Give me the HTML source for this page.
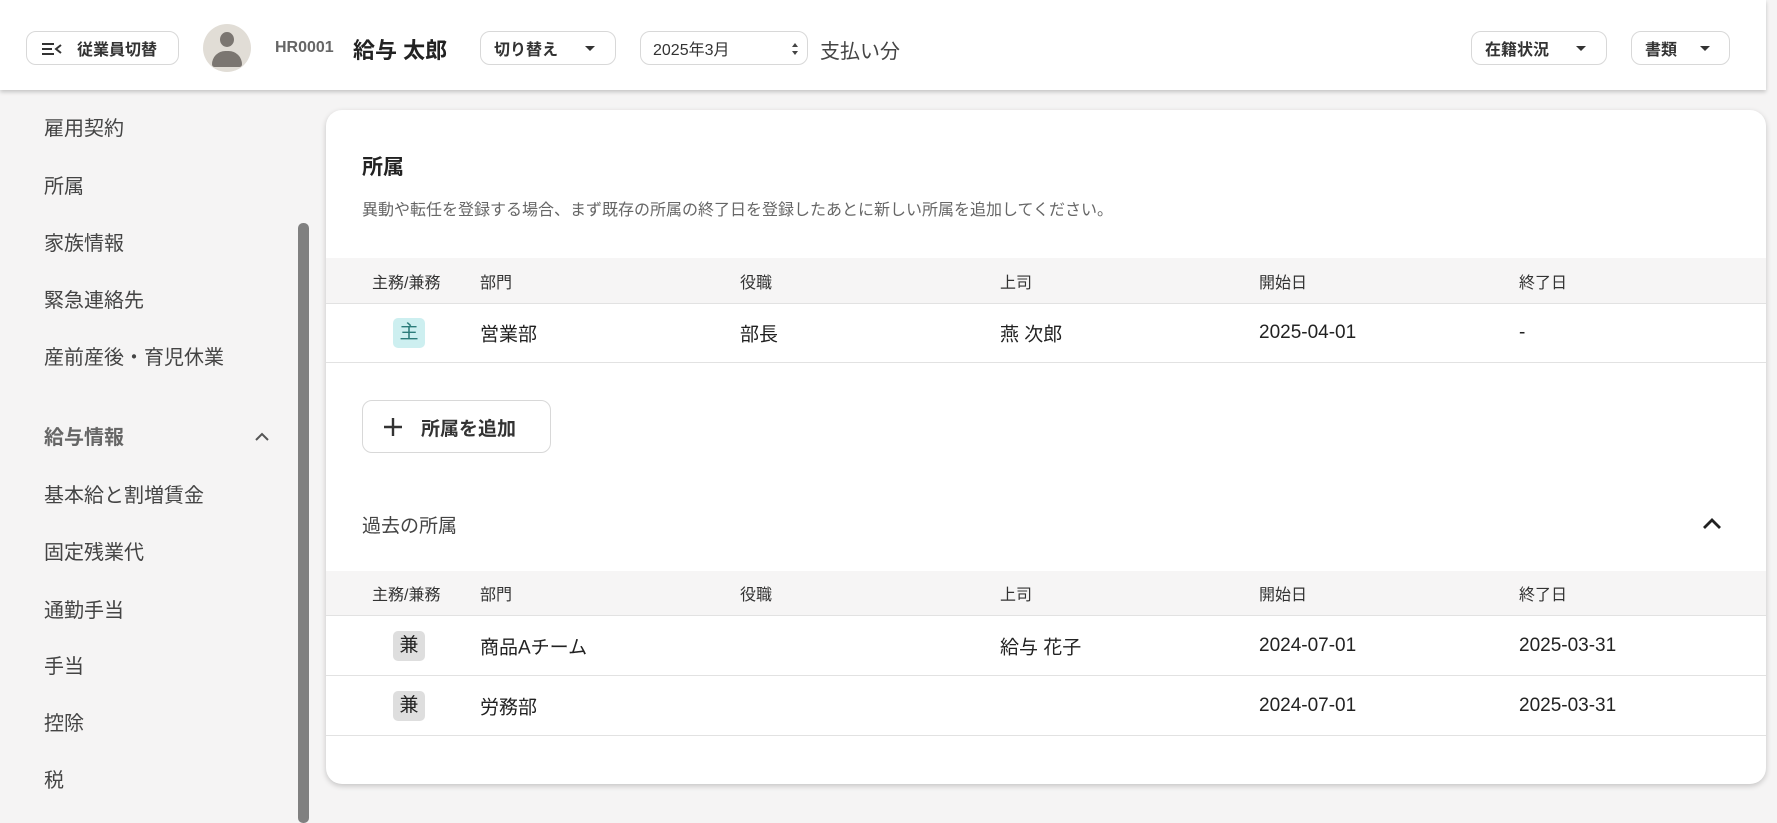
<!DOCTYPE html>
<html><head><meta charset="utf-8">
<style>
*{box-sizing:border-box;margin:0;padding:0}
body{width:1777px;height:801px;overflow:hidden;background:#f5f4f4;font-family:"Liberation Sans","Noto Sans CJK JP",sans-serif;color:#333;position:relative}
.hdr{position:absolute;left:0;top:0;width:1766px;height:90px;background:#fff;box-shadow:0 2px 4px rgba(0,0,0,.2);z-index:2}
.btn{position:absolute;top:31px;height:34px;border:1px solid #d8d8d8;border-radius:10px;background:#fff;font-weight:bold;font-size:16px;display:flex;align-items:center;color:#333}
.tri{display:inline-block;width:0;height:0;border-left:5px solid transparent;border-right:5px solid transparent;border-top:5px solid #333;position:absolute}
.abs{position:absolute}
.side{position:absolute;left:0;top:90px;width:310px;height:711px;background:#f5f4f4}
.side div{position:absolute;left:44px;font-size:20px;color:#444;line-height:24px}
.card{position:absolute;left:326px;top:110px;width:1440px;height:674px;background:#fff;border-radius:16px;box-shadow:0 2px 6px rgba(0,0,0,.2)}
.th{position:absolute;left:0;width:1440px;background:#f6f5f5;border-bottom:1px solid #e2e2e2}
.row{position:absolute;left:0;width:1440px;border-bottom:1px solid #e2e2e2}
.c{position:absolute;top:50%;transform:translateY(-50%);white-space:nowrap}
.th .c{font-size:16px;color:#333}
.row .c{font-size:19px;color:#222}
.badge{position:absolute;left:67px;top:50%;transform:translateY(-50%);width:32px;height:30px;border-radius:5px;text-align:center;line-height:30px;font-size:19px}
</style></head><body>
<div class="hdr">
  <div class="btn" style="left:26px;width:153px">
    <svg class="abs" style="left:14px;top:11px" width="22" height="12" viewBox="0 0 22 12"><path d="M1 1h12M1 6h10M1 11h12" stroke="#333" stroke-width="2"/><path d="M20 2l-5 4 5 4" stroke="#333" stroke-width="2" fill="none"/></svg>
    <span class="abs" style="left:50px">従業員切替</span></div>
  <div class="abs" style="left:203px;top:24px;width:48px;height:48px;border-radius:50%;background:#e1ddd6;overflow:hidden">
    <div class="abs" style="left:17px;top:8px;width:14px;height:15px;border-radius:50%;background:#7b7671"></div>
    <div class="abs" style="left:9px;top:27px;width:30px;height:16px;border-radius:15px 15px 3px 3px;background:#7b7671"></div>
  </div>
  <div class="abs" style="left:275px;top:39px;font-size:16px;font-weight:bold;color:#666">HR0001</div>
  <div class="abs" style="left:353px;top:33px;font-size:22px;font-weight:bold;color:#222">給与 太郎</div>
  <div class="btn" style="left:480px;width:136px"><span class="abs" style="left:13px">切り替え</span><span class="tri" style="left:104px;top:14px"></span></div>
  <div class="btn" style="left:640px;width:168px;font-weight:normal;font-size:16px"><span class="abs" style="left:12px">2025年3月</span>
    <svg class="abs" style="left:150px;top:10px" width="8" height="14"><path d="M1 5l3-4 3 4zM1 9l3 4 3-4z" fill="#444"/></svg></div>
  <div class="abs" style="left:820px;top:35px;font-size:20px;color:#444">支払い分</div>
  <div class="btn" style="left:1471px;width:136px"><span class="abs" style="left:13px">在籍状況</span><span class="tri" style="left:104px;top:14px"></span></div>
  <div class="btn" style="left:1631px;width:99px"><span class="abs" style="left:13px">書類</span><span class="tri" style="left:68px;top:14px"></span></div>
</div>
<div class="side">
  <div style="top:27px">雇用契約</div>
  <div style="top:85px">所属</div>
  <div style="top:142px">家族情報</div>
  <div style="top:199px">緊急連絡先</div>
  <div style="top:256px">産前産後・育児休業</div>
  <div style="top:336px;font-weight:bold;color:#666">給与情報</div>
  <svg class="abs" style="left:254px;top:342px" width="16" height="10"><path d="M2 8l6-6 6 6" stroke="#555" stroke-width="2" fill="none"/></svg>
  <div style="top:394px">基本給と割増賃金</div>
  <div style="top:451px">固定残業代</div>
  <div style="top:509px">通勤手当</div>
  <div style="top:565px">手当</div>
  <div style="top:622px">控除</div>
  <div style="top:679px">税</div>
  <span class="abs" style="left:298px;top:133px;width:11px;height:600px;background:#808080;border-radius:5px"></span>
</div>
<div class="card">
  <div class="abs" style="left:36px;top:41px;font-size:21px;font-weight:bold;color:#222">所属</div>
  <div class="abs" style="left:36px;top:86px;font-size:16px;color:#666">異動や転任を登録する場合、まず既存の所属の終了日を登録したあとに新しい所属を追加してください。</div>
  <div class="th" style="top:148px;height:46px"><span class="c" style="left:46px">主務/兼務</span><span class="c" style="left:154px">部門</span><span class="c" style="left:414px">役職</span><span class="c" style="left:674px">上司</span><span class="c" style="left:933px">開始日</span><span class="c" style="left:1193px">終了日</span></div>
  <div class="row" style="top:194px;height:59px"><span class="badge" style="background:#cdeff0;color:#2b7c7a">主</span><span class="c" style="left:154px">営業部</span><span class="c" style="left:414px">部長</span><span class="c" style="left:674px">燕 次郎</span><span class="c" style="left:933px">2025-04-01</span><span class="c" style="left:1193px">-</span></div>
  <div class="abs" style="left:36px;top:290px;width:189px;height:53px;border:1px solid #d8d8d8;border-radius:10px">
    <svg class="abs" style="left:20px;top:16px" width="20" height="20"><path d="M10 1v18M1 10h18" stroke="#333" stroke-width="2.4"/></svg>
    <span class="abs" style="left:58px;top:13px;font-size:19px;font-weight:bold;color:#333">所属を追加</span></div>
  <div class="abs" style="left:36px;top:401px;font-size:19px;color:#444">過去の所属</div>
  <svg class="abs" style="left:1376px;top:407px" width="20" height="13"><path d="M2 11l8-8 8 8" stroke="#222" stroke-width="2.8" fill="none"/></svg>
  <div class="th" style="top:461px;height:45px"><span class="c" style="left:46px">主務/兼務</span><span class="c" style="left:154px">部門</span><span class="c" style="left:414px">役職</span><span class="c" style="left:674px">上司</span><span class="c" style="left:933px">開始日</span><span class="c" style="left:1193px">終了日</span></div>
  <div class="row" style="top:506px;height:60px"><span class="badge" style="background:#dedede;color:#222">兼</span><span class="c" style="left:154px">商品Aチーム</span><span class="c" style="left:674px">給与 花子</span><span class="c" style="left:933px">2024-07-01</span><span class="c" style="left:1193px">2025-03-31</span></div>
  <div class="row" style="top:566px;height:60px"><span class="badge" style="background:#dedede;color:#222">兼</span><span class="c" style="left:154px">労務部</span><span class="c" style="left:933px">2024-07-01</span><span class="c" style="left:1193px">2025-03-31</span></div>
</div>
</body></html>
